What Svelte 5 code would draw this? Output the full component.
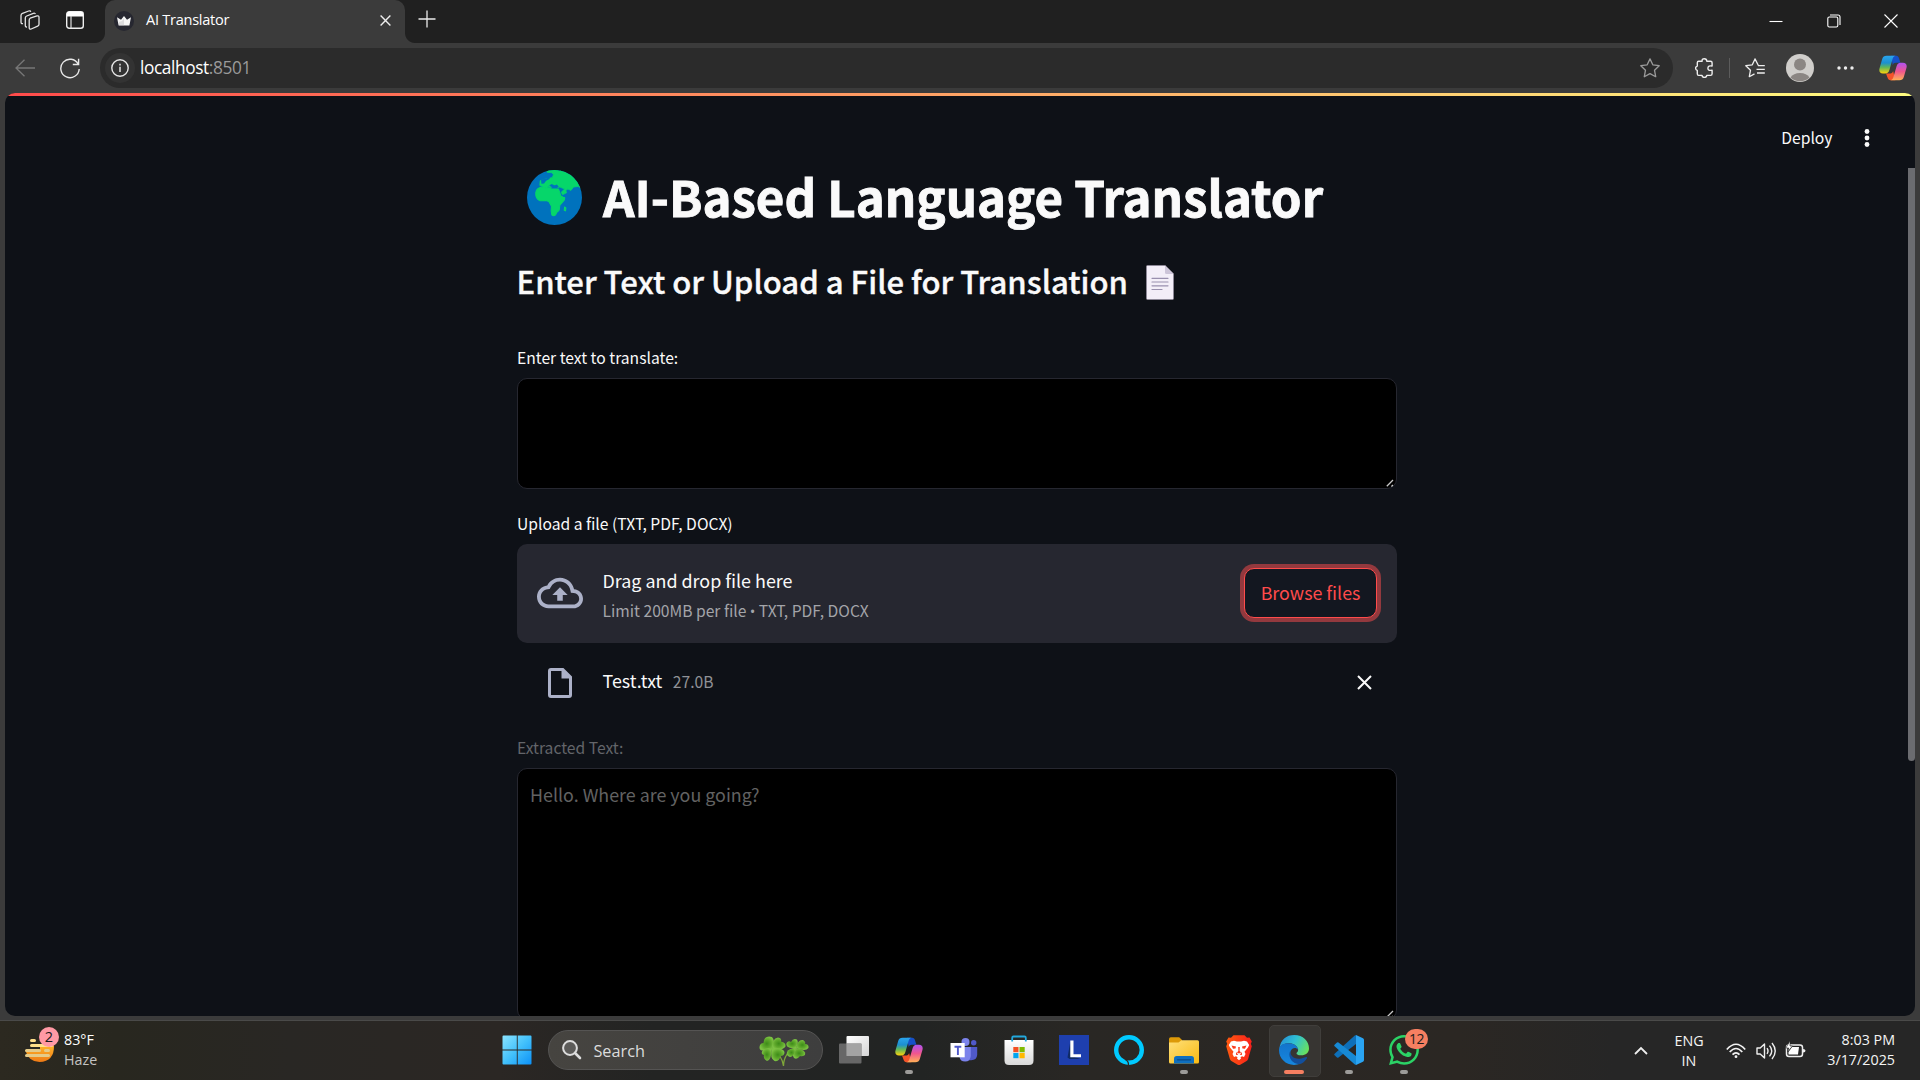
<script>
  let text = '';
</script>

{#snippet copilot()}
  <svg viewBox="0 0 28 26" class="fill">
    <defs>
      <linearGradient id="cpA" x1="0" y1="0" x2="0" y2="1"><stop offset="0" stop-color="#2aa5ee" /><stop offset=".4" stop-color="#1c8fd0" /><stop offset=".65" stop-color="#5fb65a" /><stop offset="1" stop-color="#ffd20a" /></linearGradient>
      <linearGradient id="cpB" x1="0" y1="0" x2="0" y2="1"><stop offset="0" stop-color="#b052f0" /><stop offset=".5" stop-color="#f0568e" /><stop offset="1" stop-color="#ffb057" /></linearGradient>
    </defs>
    <path d="M12 .8h5.200c1.600 0 2.400 1 2.800 2.400l1.400 4.600h-4.600c-1.700 0-2.500.8-3 2.400z" fill="#1650c8" />
    <path d="M7 18.500h4.400c1.500 0 2.200-.8 2.700-2.400l2.300 9.100h-5c-1.600 0-2.300-1-2.800-2.500z" fill="#f4542a" />
    <path d="M7.600.8h9c-2 .4-2.600 1.800-3.100 3.400L10.400 15c-.7 2.300-1.700 3.500-4.100 3.500H4C1 18.500-.2 16.500.5 13.600L3.200 4.100C3.900 1.800 5.200.8 7.600.8z" fill="url(#cpA)" />
    <path d="M20.400 25.200h-9c2-.4 2.600-1.800 3.100-3.400l3.100-10.500c.7-2.300 1.700-3.500 4.100-3.500H24c3 0 4.200 2 3.500 4.900l-2.700 9.200c-.7 2.300-2 3.300-4.400 3.300z" fill="url(#cpB)" />
  </svg>
{/snippet}

<main>
  <header class="tabs">
    <svg class="workspaces" viewBox="0 0 20 20" fill="none" stroke="#e4e4e4" stroke-width="1.3" stroke-linejoin="round"><path d="M10.200 8.200 17 5.900q2-.5 2 1.400v7q0 1.300-1.300 1.800l-6.500 2.900q-2 .6-2-1.300v-7.500q0-1.400 1-2z" /><path d="M7 17q-1.700.2-1.700-1.500V8q0-1.400 1.400-2l6.700-2.700q1.600-.5 1.900.8" /><path d="M3 13.600Q1 14 1 12V5.600Q1 4 2.500 3.400L8.700 1q1.700-.6 2 .8" /></svg>
    <svg class="layout" viewBox="0 0 18 18"><rect x=".7" y=".7" width="16.600" height="16.600" rx="2.500" fill="none" stroke="#eee" stroke-width="1.400" /><path d="M1 2.500Q1 .7 3 .7h12q2 0 2 1.800V5.500H1z" fill="#fff" /><path d="M5 5v12" stroke="#ddd" stroke-width="1.200" /></svg>
    <div class="tab">
      <svg class="favicon" viewBox="0 0 20 20"><circle cx="10" cy="10" r="10" fill="#262730" /><path d="M3 6.200 7 8.800 10 5l3 3.800 4-2.600-1.600 8.300H4.600z" fill="#f5f5f5" /><path d="m5 11 3-1 2-3v7.500H5z" fill="#bcbcc2" opacity=".45" /></svg>
      <span>AI Translator</span>
      <svg class="x" viewBox="0 0 11 11"><path d="m.6.600 9.800 9.800M10.400.600.6 10.400" stroke="#eee" stroke-width="1.400" /></svg>
    </div>
    <svg class="plus" viewBox="0 0 18 18"><path d="M9 .5v17M.5 9h17" stroke="#eaeaea" stroke-width="1.300" /></svg>
    <div class="window-controls">
      <svg viewBox="0 0 14 14"><path d="M.5 7.500h13" stroke="#fff" stroke-width="1.100" /></svg>
      <svg viewBox="0 0 14 14" fill="none" stroke="#fff" stroke-width="1.100"><rect x=".8" y="3" width="10" height="10" rx="1.500" /><path d="M3 1h8q2 0 2 2v8" /></svg>
      <svg viewBox="0 0 14 14"><path d="m.5.500 13 13M13.500.500l-13 13" stroke="#fff" stroke-width="1.100" /></svg>
    </div>
  </header>

  <nav class="toolbar">
    <svg class="back" viewBox="0 0 20 18" fill="none" stroke="#777" stroke-width="1.300"><path d="M20 9H1M9.500.700 1 9l8.500 8.300" /></svg>
    <svg class="reload" viewBox="0 0 20 21" fill="none" stroke="#e8e8e8" stroke-width="1.400"><path d="M18.200 6.200A9.200 9.200 0 1 0 19.200 11M18.600.800v5.700h-5.800" /></svg>
    <div class="address">
      <span class="info"><svg viewBox="0 0 18 18"><circle cx="9" cy="9" r="8.200" fill="none" stroke="#e6e6e6" stroke-width="1.400" /><path d="M9 7.800v5.200M9 4.700v1.700" stroke="#e6e6e6" stroke-width="1.500" /></svg></span>
      <span class="url">localhost<i>:8501</i></span>
      <svg class="star" viewBox="0 0 20 20" fill="none" stroke="#9b9b9b" stroke-width="1.300" stroke-linejoin="round"><path d="m10 .9 2.800 5.900 6.400.900-4.700 4.500 1.200 6.500L10 15.600l-5.700 3.100 1.200-6.500L.8 7.700l6.400-.9z" /></svg>
    </div>
    <svg class="puzzle" viewBox="0 0 18 20" fill="none" stroke="#eee" stroke-width="1.400" stroke-linejoin="round"><path d="M3.600 3.200h3.500q-.2-2.500 2.200-2.500t2.500 2.500h3.700q1.600 0 1.600 1.600v3.300q-4-.8-4.200 2t4.200 2.200v3.500q0 1.600-1.600 1.600h-3.700q-.2 2-2.400 2t-2.400-2H3.600q-1.300 0-1.300-1.600v-3.400Q.6 12 .6 10.200t1.700-2.100V4.800q0-1.600 1.300-1.600z" /></svg>
    <span class="divider"></span>
    <svg class="favlist" viewBox="0 0 20 20" fill="none" stroke="#eee" stroke-width="1.300" stroke-linejoin="round"><path d="M19.800 7.700h-6.300L10 .9 7.300 6.800l-6.500.9 4.700 4.500-1.200 6.500 5.200-2.800M11.500 11.300h8.300M12 15h7.800" /></svg>
    <svg class="avatar" viewBox="0 0 28 28"><circle cx="14" cy="14" r="14" fill="#d0cecb" /><circle cx="14" cy="10.500" r="6" fill="#8b8683" /><path d="M4.500 23.500a10.500 8 0 0 1 19 0A14 14 0 0 1 4.500 23.500z" fill="#8b8683" /></svg>
    <svg class="more" viewBox="0 0 17 4" fill="#eee"><circle cx="2" cy="2" r="1.700" /><circle cx="8.500" cy="2" r="1.700" /><circle cx="15" cy="2" r="1.700" /></svg>
    <span class="copilot-side">{@render copilot()}</span>
  </nav>

  <section class="frame">
    <div class="page">
      <div class="decoration"></div>
      <div class="app-menu">
        <span>Deploy</span>
        <svg viewBox="0 0 6 18" fill="#fafafa"><circle cx="3" cy="2.500" r="2.400" /><circle cx="3" cy="9" r="2.400" /><circle cx="3" cy="15.500" r="2.400" /></svg>
      </div>
      <div class="scrollbar"></div>
      <div class="column">
        <h1>
          <svg class="globe" viewBox="80 60 164 164"><defs><clipPath id="gl"><circle cx="162" cy="142" r="82" /></clipPath></defs><g clip-path="url(#gl)"><path d="M80 60h164v164H80z" fill="#0072bd" /><path fill="#06d66a" stroke="#06d66a" stroke-width="3" stroke-linejoin="round" d="M106 128q2-16 22-17 6-3 10 2h8l8 4h20l7 20 8 5q6-2 2 8l-13 15-2 14q-2 3-7 7l-4 8q-6 5-11 0l-2-12 1-14-8-14-8-3-18 1q-14-5-13-24zM192 170l4 3-1 9-4-2z" /><path fill="#06d66a" stroke="#06d66a" stroke-width="2" stroke-linejoin="round" d="m118 106 1-14 13-4 9-2 14-4 4-8-5-6-14-1v-8h28l8 4 12-4q30-10 60 18 16 20 14 40l-4 10-9 8-7-20-9-6-14 2-8 10-9-4-6 4 2 7-12 6-4-8 10-9-14-6-6 1-5-6-8-1-7 8-8-4-8 5z" /><path d="M122 88l18-3 2-14 7 3-2 13-10 5-6 8-8 1zM146 106l8-4 8 4 7-3 6 7-18 3z" fill="#0072bd" /></g></svg>
          <span>AI-Based Language Translator</span>
        </h1>
        <h3>
          <span>Enter Text or Upload a File for Translation</span>
          <svg class="page-icon" viewBox="0 0 28 35"><path d="M1.500.500h17.700l8.300 8.300v24.700q0 1-1 1h-25q-1 0-1-1v-32q0-1 1-1z" fill="#f3eef8" stroke="#8f8998" stroke-width=".9" /><path d="M19 1v6.500q0 1.500 1.500 1.500H27.500z" fill="#cdc5d9" /><g stroke="#998fae" stroke-width="1.200" stroke-linecap="round"><path d="M6 13.300h16M6 17h16M6 20.800h16M6 24.500h10" /></g></svg>
        </h3>
        <label for="source">Enter text to translate:</label>
        <div class="area short"><textarea id="source" bind:value={text}></textarea><svg class="grip" viewBox="0 0 8 8" stroke="#c8c8c8" stroke-width="1.300"><path d="M.8 7.200 7 1M5.400 7.400 7 6" /></svg></div>
        <div class="label second">Upload a file (TXT, PDF, DOCX)</div>
        <div class="dropzone">
          <svg class="cloud" viewBox="0 0 24 24" fill="#acb1c8"><path d="M19.350 10.040C18.670 6.590 15.640 4 12 4 9.110 4 6.600 5.640 5.350 8.040 2.340 8.360 0 10.910 0 14c0 3.310 2.690 6 6 6h13c2.760 0 5-2.240 5-5 0-2.640-2.050-4.780-4.650-4.960zM19 18H6c-2.210 0-4-1.790-4-4 0-2.050 1.530-3.760 3.560-3.970l1.070-.11.5-.95A5.469 5.469 0 0 1 12 6c2.620 0 4.880 1.860 5.390 4.430l.3 1.500 1.530.11A2.980 2.980 0 0 1 22 15c0 1.650-1.350 3-3 3zM8 13h2.550v3h2.900v-3H16l-4-4z" /></svg>
          <div class="hints">
            <span class="big">Drag and drop file here</span>
            <small>Limit 200MB per file <b>•</b> TXT, PDF, DOCX</small>
          </div>
          <button>Browse files</button>
        </div>
        <div class="file">
          <svg class="file-icon" viewBox="0 0 24 30"><path d="M3 1.500h11.800l7.700 7.700V27q0 1.500-1.500 1.500H3q-1.500 0-1.500-1.500V3q0-1.500 1.500-1.500z" fill="none" stroke="#acb1c8" stroke-width="3" /><path d="M13.500 1.500V10.500H22.500z" fill="#acb1c8" /></svg>
          <span class="name">Test.txt</span><small>27.0B</small>
          <svg class="remove" viewBox="0 0 15 15"><path d="m1 1 13 13M14 1 1 14" stroke="#fafafa" stroke-width="2" /></svg>
        </div>
        <div class="label third">Extracted Text:</div>
        <div class="area tall">Hello. Where are you going?<svg class="grip" viewBox="0 0 8 8" stroke="#c8c8c8" stroke-width="1.300"><path d="M.8 7.200 7 1M5.400 7.400 7 6" /></svg></div>
      </div>
    </div>
  </section>

  <footer>
    <div class="weather">
      <svg viewBox="0 0 34 36"><defs><linearGradient id="sun" x1="0" y1="0" x2="0" y2="1"><stop offset="0" stop-color="#ffb52a" /><stop offset="1" stop-color="#ee7a16" /></linearGradient></defs><path d="M.5 24 .8 18.500H29q.3 16-14.500 16.500Q4 35 .5 24z" fill="url(#sun)" /><path d="M0 16h15v7H0z" fill="#2a2820" /><g stroke="#ffe08a" stroke-width="3" stroke-linecap="round"><path d="M6.500 13.500h3M6.500 18.500h20" /></g><g stroke="#e4cb8a" stroke-width="3" stroke-linecap="round"><path d="M1.500 23.500h13M20.500 23.500h3M1.500 28.500h22" /></g><circle cx="24" cy="10" r="10" fill="#ff99a4" /><text x="24" y="15.200" text-anchor="middle" font-size="14.500" fill="#1a1a1a">2</text></svg>
      <div class="stack"><span>83°F</span><span class="dim">Haze</span></div>
    </div>
    <div class="cell"><svg viewBox="0 0 30 30"><defs><linearGradient id="win" x1="0" y1="0" x2="1" y2="1"><stop offset="0" stop-color="#8be4ff" /><stop offset=".5" stop-color="#43c1fb" /><stop offset="1" stop-color="#0c91f8" /></linearGradient></defs><path d="M1.500.500h13.300v14H.5v-13q0-1 1-1zM15.700.500h12.800q1 0 1 1v13H15.700zM.5 15.500h14.300v14H1.500q-1 0-1-1zM15.700 15.500h13.800v13q0 1-1 1H15.700z" fill="url(#win)" /></svg></div>
    <div class="search">
      <svg class="lens" viewBox="0 0 20 20" fill="none" stroke="#ddd" stroke-width="2"><circle cx="8" cy="8" r="6.900" fill="#5c5b59" /><path d="m13 13 5 5" stroke-width="2.600" stroke-linecap="round" /></svg>
      <span>Search</span>
      <svg class="clover" viewBox="0 0 50 32"><defs><radialGradient id="leaf"><stop offset="0" stop-color="#3d8c18" /><stop offset=".6" stop-color="#5fa82c" /><stop offset="1" stop-color="#7cc243" /></radialGradient></defs><path d="M13 13q10 6 11.500 17M37 12Q25 16 24.500 30" fill="none" stroke="#7fa63a" stroke-width="1.300" /><g fill="url(#leaf)"><path d="M13 13Q0 17 .5 11 1 7 4.500 7 5-1 13 1q4 4 0 12z" /><path d="M13 13Q13 2 19 1.500q4 .5 3 4 5 1 4.500 5Q24 15 13 13z" /><path d="M13 13q11-2 12.500 3 0 4-4 4-1 6-6 5-5-3-2.500-12z" /><path d="M13 13q-1 12-5 12-4-2-3-6-4-1-1-5 4-3 9-1z" /><path d="M37 12Q26 13 27.500 7q2-3 4.500-1 2-4 6-2.500 2 3-1 8.500z" /><path d="M37 12q2-9 7-8 3 2 2 4 4 0 3.500 4-3 4-12.500 0z" /><path d="M37 12q11 2 9 7-3 2-5 1-3 4-6 2-3-3 2-10z" /><path d="M37 12q-2 9-6 9-4-1-3-5 2-4 9-4z" /></g></svg>
    </div>
    <div class="cell"><svg viewBox="0 0 30 30"><defs><linearGradient id="tv" x1="0" y1="0" x2="1" y2="1"><stop offset="0" stop-color="#fff" /><stop offset="1" stop-color="#d5d5d5" /></linearGradient></defs><rect x="7.500" y="1" width="22.500" height="20" rx="1" fill="url(#tv)" /><rect x="0" y="8.500" width="22.500" height="20" rx="1" fill="#6f6f6f" opacity=".9" /><path d="M7.500 8.500h15V21h-15z" fill="#a3a3a3" /></svg></div>
    <div class="cell dot"><span class="cp">{@render copilot()}</span></div>
    <div class="cell"><svg viewBox="0 0 30 30"><circle cx="16.500" cy="7" r="4" fill="#7b83eb" /><circle cx="24.700" cy="7.800" r="2.700" fill="#5059c9" /><path d="M17 12h11.200v8q-.5 5.200-6 5.200h-5z" fill="#5059c9" /><path d="M10 12h11.800v9q-.6 5.600-5.600 5.600T10.500 22z" fill="#7b83eb" /><path d="M1.500 8h14.200v14.300H1.500z" fill="#fff" /><path d="M5.500 11.800h6.800M8.900 11.800v8.200" stroke="#5059c9" stroke-width="1.900" /></svg></div>
    <div class="cell"><svg viewBox="0 0 30 30"><defs><linearGradient id="st" x1="0" y1="0" x2="0" y2="1"><stop offset="0" stop-color="#fff" /><stop offset="1" stop-color="#d9d9d9" /></linearGradient></defs><path d="M.5 5h29v20.500q0 4.500-4.500 4.500H5q-4.500 0-4.500-4.500z" fill="url(#st)" /><path d="M8.200 6.500V2.800q0-1.300 1.300-1.300h11q1.300 0 1.300 1.300v3.700" fill="none" stroke="#23a8dc" stroke-width="1.800" /><path d="M9.300 12h5.200v5.200H9.300z" fill="#f25022" /><path d="M15.500 12h5.200v5.200h-5.200z" fill="#7fba00" /><path d="M9.300 18h5.200v5.200H9.300z" fill="#00a4ef" /><path d="M15.500 18h5.200v5.200h-5.200z" fill="#ffb900" /></svg></div>
    <div class="cell"><svg viewBox="0 0 30 30"><path d="M0 0h30v30H0z" fill="#1e3fae" /><path d="m11.500 5.500-3 17 2 1.500h11l-9-3z" fill="#102b66" /><path d="M11.300 5.500h3.200v13.700H22v3H11.300z" fill="#fff" /></svg></div>
    <div class="cell"><svg viewBox="0 0 30 30"><circle cx="15" cy="15" r="12.800" fill="none" stroke="#00caff" stroke-width="4.400" /><path d="M11 24.500q3.500 1 3.500 5.500" fill="none" stroke="#2b2822" stroke-width="1.300" /></svg></div>
    <div class="cell dot"><svg viewBox="0 0 30 30"><defs><linearGradient id="fo" x1="0" y1="0" x2="1" y2="1"><stop offset="0" stop-color="#ffe07a" /><stop offset="1" stop-color="#f9ba12" /></linearGradient></defs><path d="M0 4q0-1.800 1.800-1.800h8.400L13 5v6H0z" fill="#dd9a08" /><path d="M0 7.500h9.500L12.500 5.200H28.500q1.500 0 1.500 1.500V27q0 1.500-1.500 1.500h-27Q0 28.500 0 27z" fill="url(#fo)" /><path d="M5 28.500v-4.800q0-2.700 2.700-2.700h14.600q2.700 0 2.700 2.700v4.800z" fill="#0f6fbf" /><path d="M8.500 24.800h13" stroke="#0a4a87" stroke-width="1.200" stroke-linecap="round" /></svg></div>
    <div class="cell"><svg viewBox="0 0 30 30"><defs><linearGradient id="br" x1="0" y1="0" x2="1" y2="0"><stop offset="0" stop-color="#ff5a10" /><stop offset="1" stop-color="#f8201c" /></linearGradient></defs><path d="M9.500.200h11l2.500 2.600 2.500-.4 2.300 4-1 2.400 1 2.500-3.600 12.500q-.5 1.500-2 2.500l-5.500 3.300q-1.700 1-3.400 0l-5.500-3.300q-1.500-1-2-2.500L2.200 11.300l1-2.500-1-2.400 2.300-4 2.500.4z" fill="url(#br)" /><path d="m7 6.500 3-.700 3 .7h4l3-.7 3 .7 2.200 3.500-1.200 2.500-3.500 4.300 1 2.200-1.500 3-2-.8-1.500 1 .5 1.300L15 25.200l-2-1.700.5-1.300-1.500-1-2 .8-1.500-3 1-2.200L6 12.500 4.800 10z" fill="#fff" /><path d="m7.500 10.500 4.500 1-.5 2-2.500.2zM22.500 10.500l-4.500 1 .5 2 2.500.2zM14.200 12h1.600l-.2 4 1.500 1.500-2.100 1.100-2.100-1.100 1.500-1.500zM12 17l2.300 2.700-2.200.3zM18 17l-2.300 2.700 2.200.3z" fill="#fb3a1c" /></svg></div>
    <div class="cell active"><svg viewBox="0 0 90 90"><defs><linearGradient id="e1" x1="0" y1=".3" x2="1" y2=".7"><stop offset="0" stop-color="#2592d8" /><stop offset=".45" stop-color="#2fc0d3" /><stop offset="1" stop-color="#6be35a" /></linearGradient><linearGradient id="e2" x1="0" y1="0" x2="0" y2="1"><stop offset="0" stop-color="#1374cc" /><stop offset="1" stop-color="#1687de" /></linearGradient></defs><path d="M1 42C4 14 22 0 46 0c26 0 44 18 44 40 0 14-10 21-23 21-10 0-16-4-14-8 4-3 5-7 4-12C52 30 42 25 28 25 14 25 4 32 1 42z" fill="url(#e1)" /><path d="M0 46C0 32 12 25 27 25c18 0 29 9 30 19-6-8-18-6-22 4-6 14 6 34 30 37-6 4-14 5-20 5C20 90 0 70 0 46z" fill="url(#e2)" /><path d="M35 46c-4 14 8 27 28 25 9-1 15-5 19-5 3 0 3 3 1 5-5 8-12 14-22 17-20-1-34-20-29-36z" fill="#124f9c" /></svg></div>
    <div class="cell dot"><svg viewBox="0 0 30 30"><path d="m22 0 7 3.300q1 .5 1 1.700v20q0 1.200-1 1.700L22 30z" fill="#2aa4f2" /><path d="M22 0v9L4.500 22.500q-.8.600-1.500 0L.6 20.300q-.8-.8 0-1.600L20.500.700z" fill="#0e6fb8" /><path d="M22 30v-9L4.500 7.500Q3.700 6.900 3 7.500L.6 9.700q-.8.800 0 1.600l19.900 18z" fill="#1789d4" /></svg></div>
    <div class="cell dot"><svg viewBox="0 0 24 24"><path fill="#2bd366" d="M17.472 14.382c-.297-.149-1.758-.867-2.030-.967-.273-.099-.471-.148-.67.150-.197.297-.767.966-.94 1.164-.173.199-.347.223-.644.075-.297-.150-1.255-.463-2.390-1.475-.883-.788-1.480-1.761-1.653-2.059-.173-.297-.018-.458.130-.606.134-.133.298-.347.446-.520.149-.174.198-.298.298-.497.099-.198.050-.371-.025-.520-.075-.149-.669-1.612-.916-2.207-.242-.579-.487-.500-.669-.510-.173-.008-.371-.010-.570-.010-.198 0-.520.074-.792.372-.272.297-1.040 1.016-1.040 2.479 0 1.462 1.065 2.875 1.213 3.074.149.198 2.096 3.200 5.077 4.487.709.306 1.262.489 1.694.625.712.227 1.360.195 1.871.118.571-.085 1.758-.719 2.006-1.413.248-.694.248-1.289.173-1.413-.074-.124-.272-.198-.570-.347m-5.421 7.403h-.004a9.870 9.870 0 0 1-5.031-1.378l-.361-.214-3.741.982.998-3.648-.235-.374a9.860 9.860 0 0 1-1.510-5.260c.001-5.450 4.436-9.884 9.888-9.884 2.640 0 5.122 1.030 6.988 2.898a9.825 9.825 0 0 1 2.893 6.994c-.003 5.450-4.437 9.884-9.885 9.884m8.413-18.297A11.815 11.815 0 0 0 12.050 0C5.495 0 .160 5.335.157 11.892c0 2.096.547 4.142 1.588 5.945L.057 24l6.305-1.654a11.882 11.882 0 0 0 5.683 1.448h.005c6.554 0 11.890-5.335 11.893-11.893a11.821 11.821 0 0 0-3.480-8.413z" /></svg><span class="badge">12</span></div>
    <div class="tray">
      <svg class="chevron" viewBox="0 0 14 9"><path d="m1 8 6-6 6 6" fill="none" stroke="#eee" stroke-width="1.800" /></svg>
      <div class="stack lang"><span>ENG</span><span>IN</span></div>
      <svg class="wifi" viewBox="0 0 20 16" fill="none" stroke="#f2f2f2" stroke-width="1.700"><path d="M.8 6.500Q10-4 19.200 6.500M3.700 9Q10 2 16.300 9M6.500 11.600q3.500-3.600 7 0" /><circle cx="10" cy="13.700" r="1.400" fill="#f2f2f2" stroke="none" /></svg>
      <svg class="sound" viewBox="0 0 20 18" fill="none" stroke="#eee" stroke-width="1.400" stroke-linejoin="round"><path d="M1 6h3.200L8.500 2v14L4.200 12H1zM11 6.200q2 2.800 0 5.600M13.500 3.600q4.500 5.400 0 10.800M16 1q6.500 8 0 16" /></svg>
      <svg class="battery" viewBox="0 0 21 17"><rect x="1.500" y="4" width="16" height="11.500" rx="2.500" fill="none" stroke="#eee" stroke-width="1.500" /><path d="M18 8q2.500 0 2.500 1.800T18 11.500z" fill="#eee" /><path d="M3.500 11 7 6h7l-1 7.500H3.500z" fill="#fff" /><path d="M5 0 .8 7h3L2.500 11 7.500 5H5z" fill="#fff" stroke="#262626" stroke-width=".6" /></svg>
      <div class="stack clock"><span>8:03 PM</span><span>3/17/2025</span></div>
    </div>
  </footer>
</main>

<style>
  :global(body) { background: #202020; overflow: hidden; }
  * { box-sizing: border-box; }
  main { width: 1920px; height: 1080px; display: flex; flex-direction: column; font-family: "Open Sans", sans-serif; color: #fff; overflow: hidden; }
  svg { display: block; flex: none; }
  .fill { width: 100%; height: 100%; }

  .tabs { height: 43px; flex: none; display: flex; align-items: flex-start; background: #202020; }
  .workspaces { width: 20px; height: 20px; margin: 10px 0 0 20px; }
  .layout { width: 18px; height: 18px; margin: 11px 0 0 26px; }
  .tab { position: relative; width: 300px; height: 43px; margin-left: 21px; padding: 0 14px 2px 9px; display: flex; align-items: center; background: #3b3b3b; border-radius: 10px 10px 0 0; }
  .tab::before, .tab::after { content: ""; position: absolute; bottom: 0; width: 10px; height: 10px; }
  .tab::before { left: -10px; background: radial-gradient(circle at 0 0, #202020 9.500px, #3b3b3b 10.500px); }
  .tab::after { right: -10px; background: radial-gradient(circle at 100% 0, #202020 9.500px, #3b3b3b 10.500px); }
  .tab span { margin: -3px 0 0 12px; font-size: 14.600px; letter-spacing: -.28px; line-height: 20px; }
  .favicon { width: 20px; height: 20px; }
  .x { width: 11px; height: 11px; margin-left: auto; }
  .plus { width: 18px; height: 18px; margin: 10px 0 0 13px; }
  .window-controls { margin: 14px 22px 0 auto; display: flex; gap: 43.500px; }
  .window-controls svg { width: 14px; height: 14px; }

  .toolbar { height: 50px; flex: none; display: flex; align-items: center; background: #3b3b3b; }
  .back { width: 20px; height: 18px; margin-left: 15px; }
  .reload { width: 20px; height: 21px; margin-left: 25px; }
  .address { width: 1573px; height: 40px; margin-left: 20px; padding: 0 13px 0 5px; border-radius: 20px; background: #2b2b2b; display: flex; align-items: center; }
  .info { width: 30px; height: 30px; border-radius: 50%; background: #333; display: grid; place-items: center; }
  .info svg { width: 18px; height: 18px; }
  .url { margin: -1px 0 0 5px; font-size: 17.300px; letter-spacing: -.4px; line-height: 24px; }
  .url i { font-style: normal; color: #9a9a9a; }
  .star { width: 20px; height: 20px; margin-left: auto; }
  .puzzle { width: 18px; height: 20px; margin-left: 22px; }
  .divider { width: 1px; height: 20px; margin-left: 16px; background: #5c5c5c; }
  .favlist { width: 20px; height: 20px; margin-left: 15px; }
  .avatar { width: 28px; height: 28px; margin-left: 21px; }
  .more { width: 17px; height: 4px; margin-left: 23px; }
  .copilot-side { width: 28px; height: 26px; margin-left: 25px; }

  .frame { height: 928px; flex: none; padding: 0 5px 5px; background: #3b3b3b; border-bottom: 1px solid #4a4a49; }
  .page { position: relative; height: 922.500px; border-radius: 10px; background: #0e1117; overflow: hidden; font-family: "Noto Sans CJK SC", sans-serif; color: #fafafa; }
  .decoration { position: absolute; inset: 0 0 auto; height: 3px; background: linear-gradient(90deg, #ff4b4b, #fffd80); }
  .app-menu { position: absolute; top: 32px; right: 45px; display: flex; align-items: center; gap: 31.500px; font-size: 15.700px; line-height: 26px; }
  .app-menu svg { width: 6px; height: 18px; }
  .scrollbar { position: absolute; top: 75px; right: 0; width: 7px; height: 593px; border-radius: 0 0 4px 4px; background: #6b6c70; }

  .column { width: 880px; margin-left: 512px; padding-top: 69px; }
  h1 { height: 66px; margin: 0; padding-left: 10px; display: flex; align-items: center; gap: 21px; font-size: 49.200px; line-height: 66px; font-weight: 700; -webkit-text-stroke: .9px #fafafa; white-space: nowrap; }
  h1 span { margin-top: 1px; }
  .globe { width: 55px; height: 55px; margin-top: 5px; }
  h3 { height: 42px; margin: 32px 0 0; display: flex; align-items: center; gap: 17.500px; font-size: 31.080px; line-height: 42px; font-weight: 500; -webkit-text-stroke: .35px #fafafa; white-space: nowrap; }
  h3 span { margin-left: -.5px; }
  .page-icon { width: 28px; height: 35px; margin-top: 2px; }
  label, .label { display: block; height: 26px; font-size: 15.650px; line-height: 26px; }
  label { margin-top: 43px; }
  .second { margin-top: 22px; }
  .third { margin-top: 32px; color: #63656a; }
  .area { position: relative; width: 880px; border: 1px solid #262730; border-radius: 10px; background: #000; }
  .short { height: 111px; margin-top: 7px; }
  .short textarea { display: block; width: 100%; height: 100%; border: 0; padding: 12px; background: transparent; color: #fafafa; resize: none; outline: 0; }
  .tall { height: 252px; margin-top: 7px; padding: 11px 12px; font-size: 17.870px; line-height: 28px; color: #626262; }
  .grip { position: absolute; right: 2px; bottom: 1px; width: 8px; height: 8px; }
  .dropzone { height: 99px; margin-top: 7px; padding: 0 20px; border-radius: 10px; background: #262730; display: flex; align-items: center; }
  .cloud { width: 46px; height: 46px; margin-top: -2px; }
  .hints { margin-left: 19.500px; padding-top: 4px; display: flex; flex-direction: column; }
  .big { font-size: 17.900px; line-height: 30px; }
  .hints small { line-height: 32px; margin-top: 0; }
  small { font-size: 15.650px; line-height: 32px; color: #a3a4a9; }
  small b { font-family: "Open Sans", sans-serif; font-weight: 400; font-size: 15px; line-height: 1; margin: 0 -.2px; }
  button { width: 133px; height: 50px; margin: -2px 0 0 auto; padding: 0 0 1px; border: 1px solid #ff4b4b; border-radius: 10px; box-shadow: 0 0 0 4px rgba(255, 75, 75, .5); background: #131720; color: #ff4b4b; font: 400 17.850px/28px "Noto Sans CJK SC", sans-serif; }
  .file { height: 40px; margin-top: 20px; padding: 0 25px 0 31px; display: flex; align-items: center; }
  .file-icon { width: 24px; height: 30px; }
  .name { margin: -7px 0 0 30.500px; font-size: 17.900px; line-height: 28px; }
  .file small { margin: -3px 0 0 10.500px; color: #909196; }
  .remove { width: 15px; height: 15px; margin: -1px 0 0 auto; }

  footer { height: 59px; flex: none; display: flex; background: linear-gradient(90deg, #2c2920 0, #28271f 6%, #292724 15%, #2b2724 26%, #232423 34%, #222423 48%, #292724 56%, #2b2723 76%, #262626 84%, #262626 100%); }
  .weather { width: 489.400px; padding: 6px 0 0 25px; display: flex; gap: 5px; }
  .weather svg { width: 34px; height: 36px; }
  .stack { display: flex; flex-direction: column; font-size: 14.300px; line-height: 20px; }
  .weather .stack { margin-top: 3px; }
  .dim { color: #c4c3c2; }
  .cell { position: relative; width: 55px; height: 58px; display: grid; place-items: center; flex: none; }
  .cell > svg { width: 30px; height: 30px; z-index: 1; }
  .cp { width: 28px; height: 26px; }
  .dot::after { content: ""; position: absolute; left: 23.500px; top: 49px; width: 8px; height: 4px; border-radius: 2px; background: #9c9b99; }
  .active::before { content: ""; position: absolute; left: 2.500px; top: 4px; width: 50px; height: 50px; border-radius: 5px; background: #373532; border: 1px solid #403e3b; }
  .active::after { content: ""; position: absolute; left: 17.500px; top: 49px; width: 20px; height: 4px; border-radius: 2px; background: #f67f61; }
  .badge { position: absolute; left: 28.500px; top: 8px; z-index: 2; width: 23px; height: 20px; border-radius: 10px; background: #f67f61; color: #1c1c1c; font-size: 14px; line-height: 20px; letter-spacing: -.6px; text-align: center; }
  .search { width: 275px; height: 40px; margin: 9px 3.500px; padding: 0 13px 0 13.500px; border: 1px solid #555453; border-radius: 20px; background: linear-gradient(90deg, #464440, #3e3e3e); display: flex; align-items: center; font-size: 16.300px; color: #dcdcdc; flex: none; }
  .search span { margin: 1px 0 0 11px; }
  .lens { width: 20px; height: 20px; }
  .clover { width: 50px; height: 32px; margin: 3px 0 0 auto; }
  .tray { margin-left: auto; padding-right: 25px; display: flex; align-items: center; color: #f4f4f4; }
  .chevron { width: 14px; height: 9px; margin-top: -1px; }
  .lang { width: 40px; margin-left: 21px; align-items: center; }
  .tray .lang { margin-top: 0; }
  .wifi { width: 20px; height: 16px; margin-left: 17px; }
  .sound { width: 20px; height: 18px; margin-left: 10px; }
  .battery { width: 21px; height: 17px; margin: -2px 0 0 9px; }
  .clock { width: 89px; align-items: flex-end; margin-top: -1px; }
</style>
